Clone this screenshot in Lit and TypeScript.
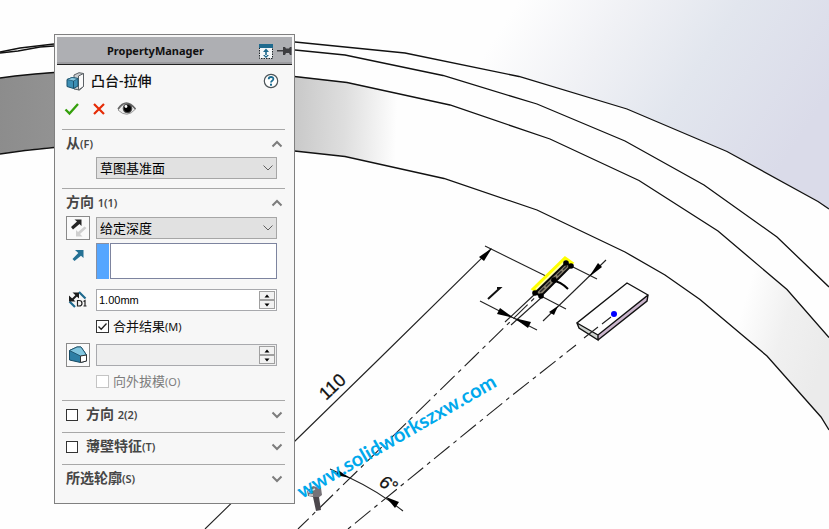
import { LitElement, html, css, svg } from "lit";
import { customElement, property, state } from "lit/decorators.js";

const chevron = (up: boolean, stroke: number) => html`
  <svg class="chevron" width="12" height="8" viewBox="0 0 12 8" aria-hidden="true">
    <path
      d=${up ? "M1.5 6.5 L6 2 L10.5 6.5" : "M1.5 1.5 L6 6 L10.5 1.5"}
      fill="none"
      stroke=${stroke > 1 ? "#7d7d7d" : "#606060"}
      stroke-width=${stroke}
    />
  </svg>
`;

const fontStack = css`
  :host {
    font-family: "Noto Sans", "Noto Sans CJK SC", sans-serif;
  }
`;

@customElement("model-view")
class ModelView extends LitElement {
  static styles = css`
    :host {
      display: block;
      overflow: hidden;
    }
    .scene {
      display: block;
      width: 100%;
      height: 100%;
    }
    .edge {
      fill: none;
      stroke: #111;
      stroke-width: 1.3;
    }
    .thin {
      fill: none;
      stroke: #222;
      stroke-width: 1.1;
    }
    .centre {
      fill: none;
      stroke: #222;
      stroke-width: 1.1;
      stroke-dasharray: 20 5 4 5;
    }
    .dimension {
      font: 18px "Liberation Sans", sans-serif;
      fill: #111;
      stroke: #111;
      stroke-width: 0.3;
    }
    .dimension.angle {
      font-style: italic;
    }
    .watermark {
      font: 700 20px Lato, sans-serif;
      fill: #00a8ec;
    }
  `;

  render() {
    return html`
      <svg class="scene" viewBox="0 0 829 529" preserveAspectRatio="xMinYMin slice" role="img" aria-label="Model view">
        <defs>
          <linearGradient id="sky" gradientUnits="userSpaceOnUse" x1="480" y1="60" x2="740" y2="230">
            <stop offset="0" stop-color="#fefefe" />
            <stop offset="0.3" stop-color="#f0f1f5" />
            <stop offset="0.6" stop-color="#e2e6ee" />
            <stop offset="1" stop-color="#dadbe9" />
          </linearGradient>
          <linearGradient id="bandLeft" gradientUnits="userSpaceOnUse" x1="0" y1="0" x2="400" y2="12">
            <stop offset="0" stop-color="#8c8c8c" />
            <stop offset="0.14" stop-color="#929292" />
            <stop offset="0.74" stop-color="#c8c8c8" />
            <stop offset="0.87" stop-color="#dedede" />
            <stop offset="1" stop-color="#fefefe" />
          </linearGradient>
          <linearGradient id="bandRight" gradientUnits="userSpaceOnUse" x1="742" y1="310" x2="829" y2="335">
            <stop offset="0" stop-color="#fefefe" />
            <stop offset="0.5" stop-color="#f0f0f0" />
            <stop offset="1" stop-color="#ebebeb" />
          </linearGradient>
        </defs>

        <rect width="829" height="529" fill="#fefefe" />
        <path d="M295 0 H829 V209 L818 201 L727 151 L627 109 L519 76 L405 53 L295 42 Z" fill="url(#sky)" />
        <path
          d="M0 78 L15 76 L54 72 L295 76 L347 82 L450 105 V180 L444 178 L345 156 L295 151 L54 147 L25 150 L0 154 Z"
          fill="url(#bandLeft)"
        />
        <path d="M718 231 L787 289 L829 337 V430 L821 417 L767 356 L700 299 Z" fill="url(#bandRight)" />

        <g class="edge">
          <path d="M0 52 L20 48 L54 44" />
          <path d="M0 53 L18 51 L40 47 L54 46" />
          <path d="M0 78 L15 76 L35 74 L54 72.5" />
          <path d="M0 154 L25 150.5 L54 147.5" />
          <path d="M290 41.5 L405 53 L519 76.5 L627 109 L727 151.5 L818 201.5 L829 209" />
          <path d="M290 49.5 L345 55 L443 75.5 L537 104 L625 141 L704 185 L777 237 L829 287" />
          <path d="M290 76 L347 82.5 L450 105 L550 139 L639 180.5 L718 231 L787 289.5 L829 337.5" />
          <path d="M290 150.5 L345 156.5 L444 178.5 L537 210 L625 252 L665 275 L700 299.5 L767 356 L821 417 L829 430" />
        </g>

        <g class="thin">
          <path d="M491 249 L378 360 L295 441 L205 529" />
          <path d="M485 246 L556 281" />
          <path d="M606 260 L543 321" />
          <path d="M571 266 L597 279" />
          <path d="M541 296 L566 309" />
          <path d="M480 301 L537 330" />
          <path d="M535 294 L505 322" />
          <path d="M541 298 L511 325" />
          <path d="M330 469 L350 478 Q378 491 403 511" />
        </g>
        <path class="centre" d="M552 281 L474 357 L298 529" />
        <path class="centre" stroke-dashoffset="8" d="M576 345 L510 397 L348 529" />

        <path d="M533 289 L565 258 L572 263 L541 294 Z" fill="#ffffb0" stroke="#ffff00" stroke-width="3" />
        <path d="M535 293 L566 263 L571 266 L541 296 Z" fill="#8a8270" stroke="#080808" stroke-width="2" />
        <path d="M540 292 L567 266" stroke="#2a2a2a" stroke-width="1.5" stroke-dasharray="6 2" />
        <path d="M553 281 Q560 281 568 289" fill="none" stroke="#000" stroke-width="2" />
        <g fill="#000">
          ${[
            [535, 293],
            [541, 296],
            [566, 263],
            [571, 266],
            [554, 280],
          ].map(([x, y]) => svg`<circle cx=${x} cy=${y} r="2.8" />`)}
          <path d="M492 248 L484 261 L479 257 Z" />
          <path d="M589 277 L598 263 L602 267 Z" />
          <path d="M558 306 L554 315 L549 312 Z" />
          <path d="M514 318 L497 314 L500 308 Z" />
          <path d="M514 318 L531 322 L528 328 Z" />
          <path d="M350 478 L336 475 L338 470 Z" />
          <path d="M386 497 L399 502 L395 508 Z" />
        </g>

        <path d="M627 283 L648 295 L598 335 L577 323 Z" fill="#fefefe" />
        <path d="M577 323 L598 335 V340 L579 328 Z" fill="#cfd3cf" />
        <path d="M598 335 L648 295 L647 301 L598 340 Z" fill="#cbb6cd" />
        <path
          d="M598 335 L577 323 L627 283 L648 295 Z V340 L579 328 L577 323 M598 340 L647 301 L648 295"
          fill="none"
          stroke="#111"
          stroke-width="1.4"
        />
        <path class="thin" d="M611 317 L602 324 M598 327 L584 338" />
        <circle cx="614" cy="314" r="3" fill="#0000ff" />

        <text class="dimension" transform="translate(326 401) rotate(-43)">110</text>
        <text class="dimension angle" transform="translate(378 485) rotate(31)">6°</text>
        <path d="M488 299 L500 288 L497 288" fill="none" stroke="#111" stroke-width="2" />

        <g>
          <path d="M307 491 L313 486 L321 488 L322 495 L318 498 L308 496 Z" fill="#777277" />
          <path d="M313 497 L319 497 L321 510 L316 511 Z" fill="#4c474c" />
          <path d="M308 492 L315 489 M309 495 L313 495" stroke="#d8d8d8" stroke-width="1.5" />
        </g>
        <text class="watermark" transform="translate(302 499) rotate(-30)">www.solidworkszxw.com</text>
      </svg>
    `;
  }
}

@customElement("panel-section")
class PanelSection extends LitElement {
  @property() label = "";
  @property() hotkey = "";
  @property({ type: Boolean }) open = false;
  @property({ type: Boolean }) optional = false;

  static styles = [
    fontStack,
    css`
      :host {
        display: block;
        border-top: 1px solid #a8a8a8;
        padding-bottom: 4px;
      }
      .head {
        display: flex;
        align-items: center;
        height: 27px;
        padding: 0 2px 0 4px;
      }
      .enable {
        appearance: none;
        width: 12px;
        height: 12px;
        margin: 0 8px 0 0;
        border: 1px solid #333;
        background: #fff;
      }
      .name {
        flex: 1;
        font-size: 14px;
        line-height: 20px;
        font-weight: 700;
        color: #464646;
        white-space: nowrap;
      }
      .key {
        font-size: 11px;
        font-weight: 600;
      }
      .toggle {
        display: flex;
        padding: 0;
        border: 0;
        background: none;
      }
    `,
  ];

  render() {
    const name = html`${this.label}<span class="key">${this.hotkey}</span>`;
    return html`
      <div class="head">
        ${this.optional ? html`<input class="enable" type="checkbox" id="enable" />` : ""}
        ${this.optional
          ? html`<label class="name" for="enable">${name}</label>`
          : html`<span class="name">${name}</span>`}
        <button
          class="toggle"
          aria-label=${this.label}
          aria-expanded=${this.open ? "true" : "false"}
          @click=${() => (this.open = !this.open)}
        >
          ${chevron(this.open, 2)}
        </button>
      </div>
      ${this.open ? html`<slot></slot>` : ""}
    `;
  }
}

@customElement("property-manager")
class PropertyManager extends LitElement {
  @state() private merge = true;

  static styles = [
    fontStack,
    css`
      :host {
        display: block;
        box-sizing: border-box;
        border: 1px solid #808080;
        padding: 2px 2px 7px;
        background: #f7f7f7;
        color: #111;
        font-size: 13px;
        line-height: 20px;
      }
      button {
        display: flex;
        align-items: center;
        justify-content: center;
        padding: 0;
        border: 0;
        background: none;
      }
      .bar {
        display: flex;
        align-items: center;
        box-sizing: border-box;
        height: 28px;
        border-bottom: 1px solid #222;
        box-shadow: inset 0 -2px #9c9ca0;
        background: #aeafb3;
      }
      .caption {
        flex: 1;
        margin: 0;
        padding-left: 50px;
        font-size: 11px;
        line-height: 20px;
        font-weight: 700;
      }
      .body {
        padding: 0 7px 0 5px;
      }
      .title {
        display: flex;
        align-items: center;
        gap: 6px;
        height: 32px;
        padding: 0 6px 0 4px;
      }
      .feature {
        flex: 1;
        margin: 0;
        font-size: 14px;
        line-height: 20px;
        font-weight: 500;
      }
      .actions {
        display: flex;
        gap: 11px;
        height: 22px;
        padding: 1px 0 9px 2px;
      }
      .group {
        display: grid;
        grid-template-columns: 24px minmax(0, 1fr);
        column-gap: 6px;
        align-items: center;
        padding: 0 8px 0 4px;
      }
      .from {
        padding-bottom: 5px;
      }
      .wide {
        grid-column: 2;
      }
      .tool {
        box-sizing: border-box;
        width: 24px;
        height: 24px;
        border: 1px solid #8a8a8a;
        background: #fafafa;
      }
      .glyph {
        display: flex;
        justify-content: center;
      }
      .glyph.top {
        align-self: start;
        padding-top: 8px;
      }
      .combo {
        display: grid;
        align-items: center;
      }
      .combo > * {
        grid-area: 1 / 1;
      }
      .combo .chevron {
        justify-self: end;
        margin-right: 3px;
        pointer-events: none;
      }
      .choice {
        appearance: none;
        box-sizing: border-box;
        width: 100%;
        height: 22px;
        padding: 0 20px 0 3px;
        border: 1px solid #a6a6a6;
        border-radius: 0;
        background: #e1e1e1;
        color: #000;
        font: 13px/20px "Noto Sans", "Noto Sans CJK SC", sans-serif;
      }
      .picked {
        display: flex;
        gap: 1px;
        height: 36px;
        margin: 3px 0 10px;
      }
      .swatch {
        width: 13px;
        background: #55a6ff;
        box-shadow: inset 1px 1px #8a8fa0;
      }
      .entries {
        flex: 1;
        box-sizing: border-box;
        min-width: 0;
        height: 36px;
        margin: 0;
        padding: 2px;
        border: 1px solid #7d849f;
        background: #fff;
        resize: none;
      }
      .spin {
        display: flex;
        box-sizing: border-box;
        height: 22px;
        padding: 1px;
        border: 1px solid #a8a9ad;
        background: #fff;
      }
      .spin.off {
        background: #efefef;
      }
      .value {
        flex: 1;
        min-width: 0;
        padding: 0 0 0 1px;
        border: 0;
        background: none;
        color: #000;
        font: 11px/18px "Liberation Sans", sans-serif;
      }
      .steps {
        display: grid;
        grid-template-rows: 1fr 1fr;
        width: 16px;
      }
      .step {
        border: 1px solid #a0a0a0;
        background: #f2f2f2;
      }
      .check {
        grid-column: 2;
        display: flex;
        align-items: center;
        gap: 4px;
        height: 30px;
        margin-bottom: 2px;
      }
      .check.off {
        height: 29px;
        margin-bottom: 0;
        color: #7c7c7c;
      }
      .mark {
        display: grid;
      }
      .mark > * {
        grid-area: 1 / 1;
      }
      .tick {
        pointer-events: none;
      }
      .box {
        appearance: none;
        box-sizing: border-box;
        width: 13px;
        height: 13px;
        margin: 0;
        border: 1px solid #333;
        background: #fff;
      }
      .box:disabled {
        border-color: #c4c4c4;
      }
      .key {
        font-size: 11px;
      }
    `,
  ];

  private steps(disabled: boolean) {
    return html`
      <span class="steps">
        <button class="step" aria-label="Increase" ?disabled=${disabled}>
          <svg width="6" height="4" viewBox="0 0 6 4"><path d="M0.5 3.5 L3 0.5 L5.5 3.5 Z" fill="#000" /></svg>
        </button>
        <button class="step" aria-label="Decrease" ?disabled=${disabled}>
          <svg width="6" height="4" viewBox="0 0 6 4"><path d="M0.5 0.5 L3 3.5 L5.5 0.5 Z" fill="#000" /></svg>
        </button>
      </span>
    `;
  }

  render() {
    return html`
      <header class="bar">
        <h1 class="caption">PropertyManager</h1>
        <button aria-label="Undock">
          <svg width="16" height="16" viewBox="0 0 16 16">
            <rect x="1.5" y="3.5" width="13" height="12" fill="#f4f7f9" stroke="#20262b" stroke-dasharray="1.5 1" />
            <rect x="1" y="1" width="14" height="4" fill="#1f6a8e" />
            <path d="M8 5.5 L11 9 H5 Z M8 15 L11 12 H5 Z M7.2 8 h1.6 v5 h-1.6 Z" fill="#1f6a8e" />
          </svg>
        </button>
        <button aria-label="Pin">
          <svg width="18" height="16" viewBox="0 0 18 16">
            <path d="M3 7 H9 V4 H11 L12 5.5 H15 L16 4 H17.5 V12 H16 L15 10 H12 L11 12 H9 V8.5 H3 Z" fill="#3d3d40" />
          </svg>
        </button>
      </header>

      <div class="body">
        <div class="title">
          <svg width="19" height="19" viewBox="0 0 19 19" aria-hidden="true">
            <path d="M8 3 L13 0.7 L17.5 1.5 V14.5 L13.5 18 L8 17 Z" fill="#c9cdd0" stroke="#5b6065" />
            <path d="M12.5 4 L17.5 1.5 V14.5 L12.5 18 Z" fill="#fafafa" stroke="#5b6065" />
            <path d="M1 7.5 L6 5.5 L12 6.5 V14 L7.5 16.5 L1 14.5 Z" fill="#3d8fb5" stroke="#1b516d" />
            <path d="M1 7.5 L6 5.5 L12 6.5 L7.5 9 Z" fill="#8ccbe4" stroke="#1b516d" stroke-width="0.7" />
            <path d="M7.5 9 V16.5" stroke="#1b516d" />
          </svg>
          <h2 class="feature">凸台-拉伸</h2>
          <button aria-label="Help">
            <svg width="16" height="16" viewBox="0 0 16 16">
              <circle cx="8" cy="8" r="6.7" fill="#fff" stroke="#4c5458" stroke-width="1.2" />
              <path d="M5.7 6.2 C5.7 3.3 10.5 3.3 10.4 6 C10.3 7.8 8 7.7 8 9.5" fill="none" stroke="#1c6c91" stroke-width="1.8" />
              <rect x="7" y="10.7" width="2" height="2" fill="#1c6c91" />
            </svg>
          </button>
        </div>

        <div class="actions">
          <button aria-label="OK">
            <svg width="16" height="16" viewBox="0 0 16 16">
              <path d="M1.5 8.5 L5.5 12.5 L14 3" fill="none" stroke="#35a00c" stroke-width="2.3" />
            </svg>
          </button>
          <button aria-label="Cancel">
            <svg width="15" height="14" viewBox="0 0 15 14">
              <path d="M3 2 L13 12 M13 2 L3 12" stroke="#e52b06" stroke-width="2.2" />
            </svg>
          </button>
          <button aria-label="Preview">
            <svg width="20" height="16" viewBox="0 0 20 16">
              <path d="M1 9 Q9 -3 18.5 8 Q10 18 1 9 Z" fill="#ececec" stroke="#999" stroke-width="1" />
              <path d="M1 8 Q9 -4 18.5 8" fill="none" stroke="#666" stroke-width="1.5" />
              <circle cx="10.5" cy="7.5" r="4.8" fill="#4a4a4a" />
              <circle cx="10.5" cy="7.5" r="3.5" fill="#000" />
              <circle cx="9" cy="5.5" r="1.4" fill="#fff" />
            </svg>
          </button>
        </div>

        <panel-section label="从" hotkey="(F)" open>
          <div class="group from">
            <div class="combo wide">
              <select class="choice" aria-label="从"><option>草图基准面</option></select>
              ${chevron(false, 1)}
            </div>
          </div>
        </panel-section>

        <panel-section label="方向 " hotkey="1(1)" open>
          <div class="group">
            <button class="tool" aria-label="反向">
              <svg width="20" height="20" viewBox="0 0 20 20">
                <path d="M3 9 L9 3.5 L6.5 1.5 H13.5 V8 L11.5 6 L5 11.5 Z" fill="#262626" />
                <path d="M18.500 10 L12 16 L14.500 18.500 H8 V12 L10 14 L16.500 8.500 Z" fill="#cfcfcf" />
              </svg>
            </button>
            <div class="combo">
              <select class="choice" aria-label="终止条件"><option>给定深度</option></select>
              ${chevron(false, 1)}
            </div>

            <span class="glyph top">
              <svg width="14" height="14" viewBox="0 0 14 14" aria-hidden="true">
                <path d="M4 2 H12.500 V10 L10 7.800 L3.500 13 L1.500 11 L7.300 5 Z" fill="#257194" />
              </svg>
            </span>
            <div class="picked">
              <span class="swatch"></span>
              <textarea class="entries" aria-label="拉伸方向" readonly></textarea>
            </div>

            <span class="glyph">
              <svg width="20" height="18" viewBox="0 0 20 18" aria-hidden="true">
                <path d="M11 1 L17.5 7.500 M1.500 10.500 L7 16" stroke="#1f6a8e" stroke-width="2.200" />
                <path d="M4 9 L10 3" stroke="#1c1c1c" stroke-width="2" />
                <path d="M4.500 1.500 H11 V7.500 Z M1 4.500 V10.500 H7.500 Z" fill="#1c1c1c" />
                <path d="M9.500 9 V15.500 M9.500 9.500 H11 Q14 9.500 14 12.200 Q14 15 11 15 H9.500 M15.500 10.500 L17 9.500 V15 M15.500 15 H18.500" fill="none" stroke="#222" stroke-width="1.200" />
              </svg>
            </span>
            <div class="spin">
              <input class="value" aria-label="深度" value="1.00mm" />
              ${this.steps(false)}
            </div>

            <label class="check">
              <span class="mark">
                <input
                  class="box"
                  type="checkbox"
                  .checked=${this.merge}
                  @change=${(e: Event) => (this.merge = (e.target as HTMLInputElement).checked)}
                />
                ${this.merge
                  ? html`<svg class="tick" width="13" height="13" viewBox="0 0 13 13" aria-hidden="true">
                      <path d="M2.5 6.5 L5.2 9.3 L10.5 3.5" fill="none" stroke="#222" stroke-width="1.3" />
                    </svg>`
                  : ""}
              </span>
              <span>合并结果<span class="key">(M)</span></span>
            </label>

            <button class="tool" aria-label="拔模">
              <svg width="20" height="18" viewBox="0 0 20 18">
                <path d="M1.500 4.500 L9 1 H13 L18.500 9 V15 L12.500 16.500 L1.500 14 Z" fill="#2e7fa5" stroke="#174a63" />
                <path d="M1.500 4.500 L9 1 H13 L18.500 9 L12.500 10 Z" fill="#83c6df" stroke="#174a63" stroke-width="0.8" />
                <path d="M12.500 10 L18.500 9 V15 L12.500 16.500 Z" fill="#fff" stroke="#333" />
              </svg>
            </button>
            <div class="spin off">
              <input class="value" aria-label="拔模角度" disabled />
              ${this.steps(true)}
            </div>

            <label class="check off">
              <input class="box" type="checkbox" disabled />
              <span>向外拔模<span class="key">(O)</span></span>
            </label>
          </div>
        </panel-section>

        <panel-section label="方向 " hotkey="2(2)" optional></panel-section>
        <panel-section label="薄壁特征" hotkey="(T)" optional></panel-section>
        <panel-section label="所选轮廓" hotkey="(S)"></panel-section>
      </div>
    `;
  }
}

@customElement("app-root")
class AppRoot extends LitElement {
  static styles = css`
    :host {
      display: grid;
      grid-template-columns: minmax(0, 1fr);
      min-height: 100vh;
    }
    .view,
    .panel {
      grid-area: 1 / 1;
    }
    .panel {
      align-self: start;
      width: 241px;
      margin: 34px 0 0 54px;
    }
    .view {
      height: 100vh;
    }
  `;

  render() {
    return html`
      <model-view class="view"></model-view>
      <property-manager class="panel"></property-manager>
    `;
  }
}
